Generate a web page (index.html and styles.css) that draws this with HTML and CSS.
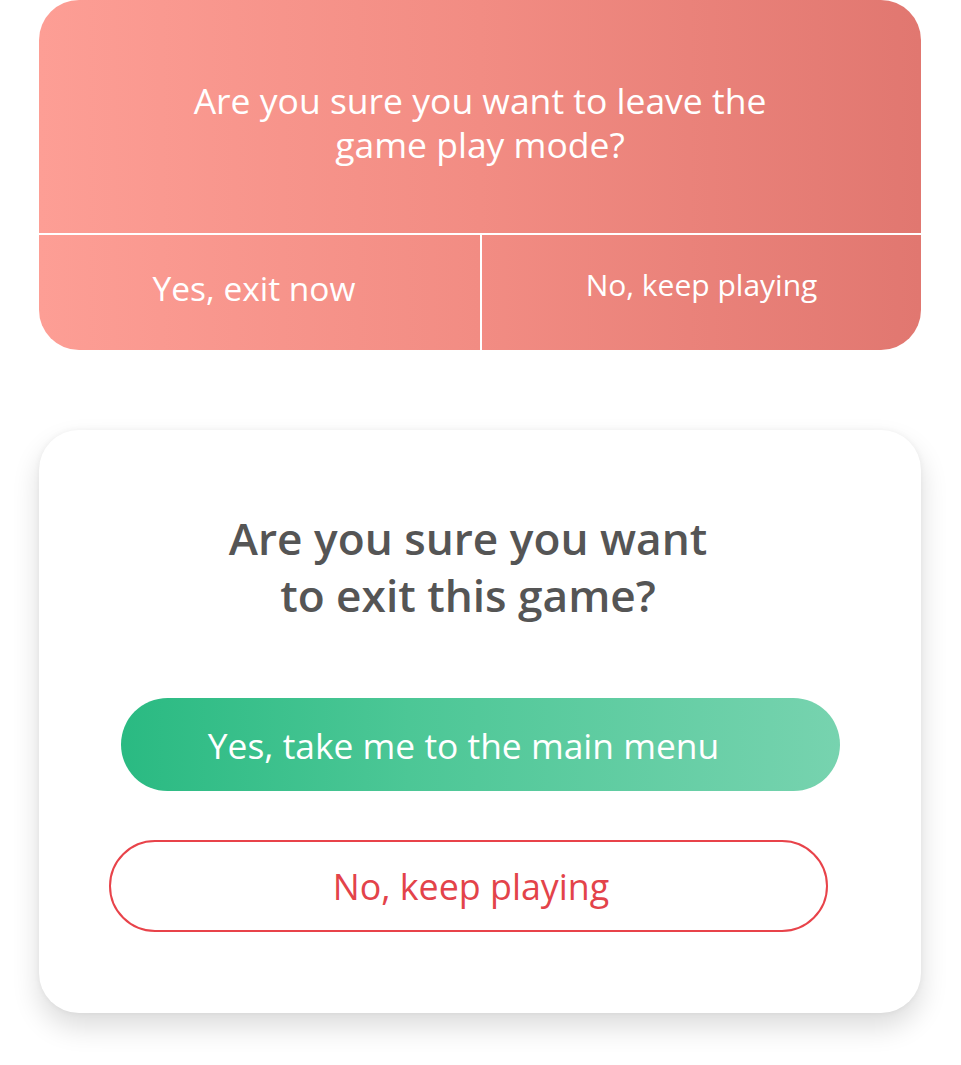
FILE: index.html
```html
<!DOCTYPE html>
<html lang="en">
<head>
<meta charset="utf-8">
<title>Exit dialogs</title>
<link rel="stylesheet" href="styles.css">
</head>
<body>
<main class="page">
  <section class="alert-card">
    <div class="alert-message">
      <p>Are you sure you want to leave the<br>game play mode?</p>
    </div>
    <div class="alert-actions">
      <button class="alert-btn alert-btn-yes">Yes, exit now</button>
      <button class="alert-btn alert-btn-no">No, keep playing</button>
    </div>
  </section>

  <section class="modal-card">
    <h2 class="modal-title">Are you sure you want<br>to exit this game?</h2>
    <div class="modal-actions">
      <button class="btn-primary">Yes, take me to the main menu</button>
      <button class="btn-outline">No, keep playing</button>
    </div>
  </section>
</main>
</body>
</html>
```
FILE: styles.css
```css
* { box-sizing: border-box; }
html, body { margin: 0; padding: 0; background: #ffffff; }
body {
  font-family: "Open Sans", "Lato", sans-serif;
  width: 961px;
  height: 1065px;
  overflow: hidden;
}
.page {
  padding: 0 40px 0 39px;
  display: flex;
  flex-direction: column;
  gap: 80px;
}
button {
  font-family: inherit;
  border: none;
  background: none;
  cursor: pointer;
  padding: 0;
}

/* Top alert */
.alert-card {
  height: 350px;
  border-radius: 40px;
  background: linear-gradient(90deg, #fd9e95 0%, #f28c83 50%, #e17770 100%);
  overflow: hidden;
  display: flex;
  flex-direction: column;
  color: #fff;
}
.alert-message {
  height: 235px;
  border-bottom: 2px solid #ffffff;
  display: flex;
  align-items: center;
  justify-content: center;
  padding-top: 11px;
}
.alert-message p {
  margin: 0;
  text-align: center;
  font-size: 35.5px;
  line-height: 44px;
  font-weight: 400;
}
.alert-actions {
  flex: 1;
  display: flex;
}
.alert-btn {
  color: #fff;
  display: flex;
  align-items: center;
  justify-content: center;
}
.alert-btn-yes {
  width: 443px;
  font-size: 33.5px;
  border-right: 2px solid #ffffff;
  padding-bottom: 10px;
  padding-right: 11px;
}
.alert-btn-no {
  flex: 1;
  font-size: 30px;
  padding-bottom: 16px;
}

/* Bottom modal */
.modal-card {
  height: 583px;
  border-radius: 40px;
  background: #ffffff;
  box-shadow: 0 14px 28px rgba(0, 0, 0, 0.14), 0 0 6px rgba(0, 0, 0, 0.05);
  display: flex;
  flex-direction: column;
  align-items: center;
  padding-top: 80px;
}
.modal-title {
  margin: 0;
  padding-right: 24px;
  text-align: center;
  color: #555555;
  font-size: 44.2px;
  line-height: 57px;
  font-weight: 600;
}
.modal-actions {
  margin-top: 74px;
  display: flex;
  flex-direction: column;
  gap: 49px;
  width: 100%;
}
.btn-primary {
  margin-left: 82px;
  width: 719px;
  height: 93px;
  border-radius: 47px;
  background: linear-gradient(90deg, #2aba82 0%, #4cc796 40%, #77d3af 100%);
  color: #ffffff;
  font-size: 35.4px;
  padding-right: 34px;
}
.btn-outline {
  margin-left: 70px;
  width: 719px;
  height: 92px;
  border-radius: 46px;
  border: 2px solid #e8434a;
  color: #e3434a;
  font-size: 35.8px;
  padding-left: 5px;
  background: #ffffff;
}
```
